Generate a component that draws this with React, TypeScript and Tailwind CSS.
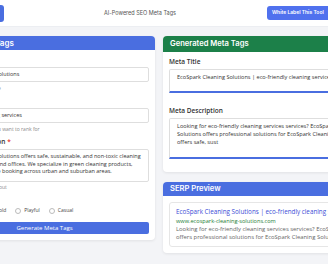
import React from 'react';

const tones = ['Professional', 'Bold', 'Playful', 'Casual'];

const Label: React.FC<{ text: string; required?: boolean; className?: string }> = ({
  text,
  required,
  className = '',
}) => (
  <div className={`whitespace-nowrap text-[6.5px] leading-[8px] font-semibold text-[#333] ${className}`}>
    {text}
    {required && <span className="ml-[2px] text-[#e53935]">*</span>}
  </div>
);

const Helper: React.FC<{ text: string; className?: string }> = ({ text, className = '' }) => (
  <div className={`whitespace-nowrap text-[5px] leading-[8px] text-[#8a8a8a] ${className}`}>{text}</div>
);

export default function App() {
  return (
    <div className="w-[328px] h-[264px] overflow-hidden bg-[#f3f4f7] font-['Open_Sans',sans-serif]">
      <div className="w-[450px] -ml-[66px]">
        {/* top bar */}
        <header className="flex h-[27px] items-center bg-white border-b border-[#eceef2]">
          <div className="ml-[46px] h-[17px] w-[24px] rounded-[3px] bg-[#4a6ee0]" />
          <span className="ml-[100px] whitespace-nowrap font-['Inter',sans-serif] text-[5.5px] text-[#555]">
            AI-Powered SEO Meta Tags
          </span>
          <button className="ml-auto mr-[47px] flex h-[14px] w-[70px] items-center whitespace-nowrap rounded-[3px] bg-[#5071ee] px-[5px] font-['Inter',sans-serif] text-[5px] font-semibold text-white">
            White Label This Tool
          </button>
        </header>

        <div className="grid grid-cols-2 gap-2 pt-[9px]">
          {/* input form */}
          <section className="self-start overflow-hidden rounded-[4px] bg-white shadow-[0_1px_3px_rgba(0,0,0,0.08)]">
            <h2 className="flex h-[14px] items-center bg-[#4a6ee0] pl-[2px] font-['Inter',sans-serif] text-[8px] font-semibold text-white">
              Generate Meta Tags
            </h2>
            <div className="px-[6px] pt-[4px] pb-[6px]">
              <Label text="Business Name" required />
              <div className="mt-[5px] flex h-[15px] items-center rounded-[2px] border border-[#dedede] px-[6px] text-[5.5px] text-[#333] whitespace-nowrap">
                EcoSpark Cleaning Solutions
              </div>
              <Helper text="Enter your business name" className="mt-[2px]" />

              <Label text="Keyword" className="mt-[4px]" />
              <div className="mt-[4px] flex h-[15px] items-center rounded-[2px] border border-[#dedede] px-[6px] text-[5.5px] text-[#333] whitespace-nowrap">
                eco-friendly cleaning services
              </div>
              <Helper text="The main search term you want to rank for" className="mt-[2px]" />

              <Label text="Business Description" required className="mt-[5px]" />
              <div className="mt-[3px] h-[33px] rounded-[2px] border border-[#dedede] px-[6px] pt-[3px] text-[5.5px] leading-[7.5px] text-[#333] whitespace-nowrap">
                <div>EcoSpark Cleaning Solutions offers safe, sustainable, and non-toxic cleaning</div>
                <div>services for homes and offices. We specialize in green cleaning products,</div>
                <div>We also offer flexible booking across urban and suburban areas.</div>
              </div>
              <Helper text="What your company is about" className="mt-[1px]" />

              <Label text="Tone" className="mt-[4px]" />
              <div className="mt-[4px] flex h-[8px] items-center gap-[9px] text-[5px] text-[#444]">
                {tones.map((tone) => (
                  <label key={tone} className="flex items-center gap-[3px] whitespace-nowrap">
                    <span className="h-[6px] w-[6px] rounded-full border border-[#bbb] bg-white" />
                    {tone}
                  </label>
                ))}
              </div>

              <button className="mt-[7px] flex h-[12px] w-full items-center justify-center rounded-[2px] bg-[#4a6ee0] text-[6px] text-white">
                Generate Meta Tags
              </button>
            </div>
          </section>

          {/* results */}
          <div className="flex flex-col gap-[10px]">
            <section className="overflow-hidden rounded-[4px] bg-white shadow-[0_1px_3px_rgba(0,0,0,0.08)]">
              <h2 className="flex h-[16px] items-center bg-[#1c8049] px-[7px] font-['Inter',sans-serif] text-[7.6px] font-semibold text-white">
                Generated Meta Tags
              </h2>
              <div className="px-[6px] pt-[6px] pb-[13px]">
                <Label text="Meta Title" />
                <div className="mt-[3px] h-[24px] rounded-t-[2px] border border-[#dedede] border-b-2 border-b-[#4a6ee0] px-[7px] pt-[3px] text-[5.6px] leading-[8px] text-[#333] whitespace-nowrap">
                  EcoSpark Cleaning Solutions | eco-friendly cleaning services
                </div>

                <Label text="Meta Description" className="mt-[14px]" />
                <div className="mt-[3px] h-[41px] rounded-t-[2px] border border-[#dedede] border-b-2 border-b-[#4a6ee0] px-[7px] pt-[3px] text-[5.6px] leading-[8px] text-[#333] whitespace-nowrap">
                  <div>Looking for eco-friendly cleaning services services? EcoSpark Cleaning</div>
                  <div>Solutions offers professional solutions for EcoSpark Cleaning Solutions</div>
                  <div>offers safe, sust</div>
                </div>
              </div>
            </section>

            <section className="overflow-hidden rounded-[4px] bg-white shadow-[0_1px_3px_rgba(0,0,0,0.08)]">
              <h2 className="flex h-[14px] items-center bg-[#4a6ee0] px-[7px] font-['Inter',sans-serif] text-[7.6px] font-semibold text-white">
                SERP Preview
              </h2>
              <div className="px-[6px] pt-[6px] pb-[6px]">
                <div className="rounded-[3px] border border-[#e6e6e6] px-[6px] pt-[4px] pb-[5px] whitespace-nowrap">
                  <div className="text-[6.3px] leading-[10px] text-[#3b4cd6]">
                    EcoSpark Cleaning Solutions | eco-friendly cleaning services
                  </div>
                  <div className="text-[5.6px] leading-[8px] text-[#1e7e34]">www.ecospark-cleaning-solutions.com</div>
                  <div className="text-[5.9px] leading-[8px] text-[#666]">
                    <div>Looking for eco-friendly cleaning services services? EcoSpark Cleaning Solutions</div>
                    <div>offers professional solutions for EcoSpark Cleaning Solutions offers safe, sust...</div>
                  </div>
                </div>
              </div>
            </section>
          </div>
        </div>
      </div>
    </div>
  );
}
